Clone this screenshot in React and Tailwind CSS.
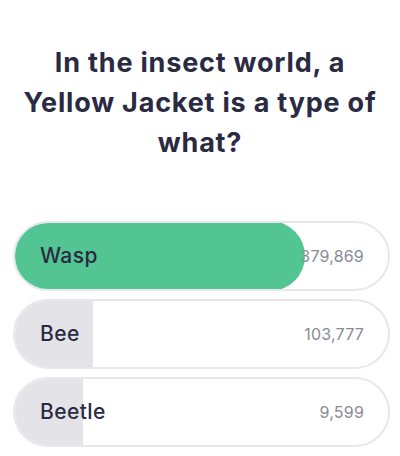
import React from "react";

const answers = [
  { label: "Wasp", votes: "379,869", fill: "w-[292px]", winner: true },
  { label: "Bee", votes: "103,777", fill: "w-[80px]" },
  { label: "Beetle", votes: "9,599", fill: "w-[70px]" },
];

export default function App() {
  return (
    <div className="w-[400px] h-[456px] bg-white overflow-hidden font-['Inter',sans-serif] text-[#2a2a42]">
      <h1 className="mx-auto pt-[43px] w-[372px] text-center text-[27px] leading-[40px] font-bold tracking-[0.8px]">
        In the insect world, a Yellow Jacket is a type of what?
      </h1>

      <div className="mt-[58px] ml-[13px] w-[377px] flex flex-col gap-[8px]">
        {answers.map((a) => (
          <div
            key={a.label}
            className="relative h-[70px] rounded-full border-2 border-[#e8e8ec] bg-white overflow-hidden"
          >
            {a.winner ? (
              <div className={`absolute -left-[2px] -top-[2px] h-[70px] rounded-full bg-[#52c592] ${a.fill}`} />
            ) : (
              <div className={`absolute -left-[2px] -top-[2px] h-[70px] bg-[#e4e4e8] ${a.fill}`} />
            )}
            <div className="relative h-full flex items-center justify-between pl-[25px] pr-[24px]">
              <span className="text-[21px] font-medium tracking-[0.4px] text-[#2a2a42]">{a.label}</span>
              <span className="text-[16px] tracking-[0.2px] text-[#8a8a94]">{a.votes}</span>
            </div>
          </div>
        ))}
      </div>
    </div>
  );
}
